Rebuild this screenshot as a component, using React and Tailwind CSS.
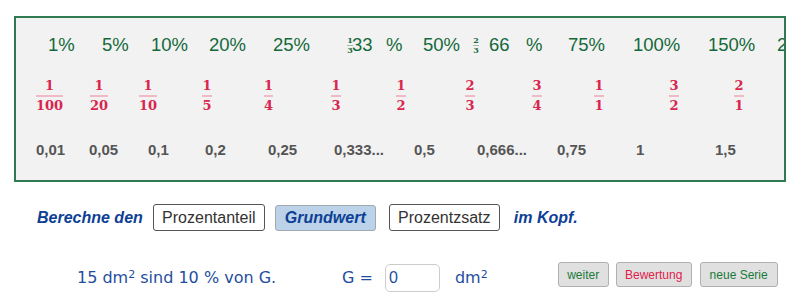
import React from "react";

const pct = [
  { w: "w-[54px]", t: "1%" },
  { w: "w-[49px]", t: "5%" },
  { w: "w-[58px]", t: "10%" },
  { w: "w-[64px]", t: "20%" },
  { w: "w-[74px]", t: "25%" },
  { w: "w-[39px]", t: "33", frac: ["1", "3"], gap: "-ml-[1px]" },
  { w: "w-[37px]", t: "%" },
  { w: "w-[50px]", t: "50%" },
  { w: "w-[53px]", t: "66", frac: ["2", "3"], gap: "ml-[10px]" },
  { w: "w-[42px]", t: "%" },
  { w: "w-[65px]", t: "75%" },
  { w: "w-[75px]", t: "100%" },
  { w: "w-[69px]", t: "150%" },
  { w: "w-auto", t: "200%" },
];

const fracs = [
  { ml: "ml-[18.5px]", n: "1", d: "100" },
  { ml: "ml-[19.5px]", n: "1", d: "20" },
  { ml: "ml-[19px]", n: "1", d: "10" },
  { ml: "ml-[29px]", n: "1", d: "5" },
  { ml: "ml-[31.5px]", n: "1", d: "4" },
  { ml: "ml-[37.5px]", n: "1", d: "3" },
  { ml: "ml-[35px]", n: "1", d: "2" },
  { ml: "ml-[39px]", n: "2", d: "3" },
  { ml: "ml-[37px]", n: "3", d: "4" },
  { ml: "ml-[32px]", n: "1", d: "1" },
  { ml: "ml-[45px]", n: "3", d: "2" },
  { ml: "ml-[35px]", n: "2", d: "1" },
];

const decs = [
  { w: "w-[53px]", t: "0,01" },
  { w: "w-[59px]", t: "0,05" },
  { w: "w-[57px]", t: "0,1" },
  { w: "w-[63px]", t: "0,2" },
  { w: "w-[66px]", t: "0,25" },
  { w: "w-[80px]", t: "0,333..." },
  { w: "w-[63px]", t: "0,5" },
  { w: "w-[80px]", t: "0,666..." },
  { w: "w-[79px]", t: "0,75" },
  { w: "w-[79px]", t: "1" },
  { w: "w-auto", t: "1,5" },
];

const TinyFrac = ({ n, d }) => (
  <span className="inline-flex flex-col items-center font-['DejaVu_Serif',serif] font-bold text-[8px] leading-[9px] text-[#1a6b3a]">
    <span>{n}</span>
    <span className="w-[6px] h-px bg-[#9cc2a8]" />
    <span>{d}</span>
  </span>
);

const App = () => {
  return (
    <div className="w-[792px] h-[303px] bg-white overflow-hidden font-['Liberation_Sans',Arial,sans-serif]">
      {/* Tabelle */}
      <div className="ml-[14px] mt-[16px] w-[772px] h-[166px] border-2 border-[#2f7a50] bg-[#f2f2f2] overflow-hidden">
        <div className="h-[54px] pl-[32px] flex items-center whitespace-nowrap text-[18.5px] text-[#14693a]">
          {pct.map((p, i) => (
            <div key={i} className={`${p.w} shrink-0 flex items-center`}>
              {p.frac && <TinyFrac n={p.frac[0]} d={p.frac[1]} />}
              <span className={p.frac ? p.gap : ""}>{p.t}</span>
            </div>
          ))}
        </div>

        <div className="h-[48px] flex items-center font-['DejaVu_Serif',serif] font-bold text-[13px] leading-[14px] text-[#d8264f]">
          {fracs.map((f, i) => (
            <div key={i} className={`${f.ml} w-[30px] shrink-0 flex justify-center`}>
              <div className="inline-flex flex-col items-center px-px">
                <span>{f.n}</span>
                <span className="self-stretch h-[2px] my-[2px] bg-[#efb9c5]" />
                <span>{f.d}</span>
              </div>
            </div>
          ))}
        </div>

        <div className="h-[60px] pl-[20px] flex items-center whitespace-nowrap text-[15px] font-bold text-[#555555]">
          {decs.map((d, i) => (
            <div key={i} className={`${d.w} shrink-0`}>{d.t}</div>
          ))}
        </div>
      </div>

      {/* Auswahl */}
      <div className="mt-[22px] pl-[37px] flex items-center text-[16px] whitespace-nowrap">
        <span className="font-bold italic text-[#0d3f96]">Berechne den</span>
        <button className="ml-[10px] w-[112px] h-[27px] border border-[#555555] rounded-[3px] bg-white text-[#333333]">
          Prozentanteil
        </button>
        <button className="ml-[10px] w-[101px] h-[26px] border border-[#a0a8b0] rounded-[3px] bg-[#bcd2e8] font-bold italic text-[#0d3f96]">
          Grundwert
        </button>
        <button className="ml-[13px] w-[111px] h-[27px] border border-[#555555] rounded-[3px] bg-white text-[#333333]">
          Prozentzsatz
        </button>
        <span className="ml-[14px] font-bold italic text-[#0d3f96]">im Kopf.</span>
      </div>

      {/* Aufgabe */}
      <div className="mt-[31px] pl-[77px] flex items-start whitespace-nowrap">
        <div className="mt-[2px] h-[28px] flex items-center font-['DejaVu_Sans',sans-serif] text-[16px] text-[#1f4e9e]">
          <span className="w-[265px]">
            15 dm<sup className="text-[11px]">2</sup> sind 10 % von G.
          </span>
          <span>G =</span>
          <div className="ml-[12px] w-[55px] h-[28px] border border-[#cccccc] rounded-[5px] bg-white flex items-center pl-[3px] font-['Liberation_Sans',Arial,sans-serif] text-[#1f4e9e]">
            0
          </div>
          <span className="ml-[15px]">
            dm<sup className="text-[11px]">2</sup>
          </span>
        </div>
        <div className="ml-[70px] flex gap-[7px] text-[12px]">
          <button className="w-[51px] h-[25px] border border-[#b0b0b0] rounded-[3px] bg-[#e0e0e0] text-[#1a7a3a]">weiter</button>
          <button className="w-[76px] h-[25px] border border-[#b0b0b0] rounded-[3px] bg-[#e0e0e0] text-[#e0204a]">Bewertung</button>
          <button className="ml-[1px] w-[78px] h-[25px] border border-[#b0b0b0] rounded-[3px] bg-[#e0e0e0] text-[#1a7a3a]">neue Serie</button>
        </div>
      </div>
    </div>
  );
};

export default App;
